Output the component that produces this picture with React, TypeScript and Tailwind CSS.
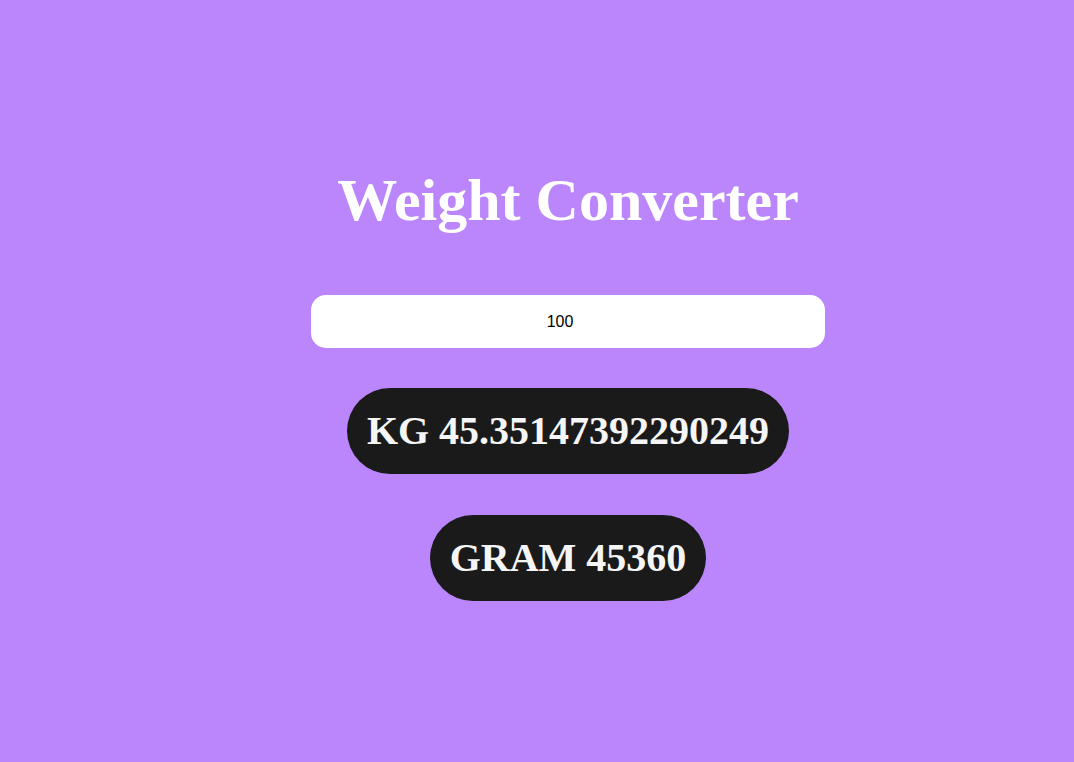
export default function App() {
  const pounds = 100;
  const kg = pounds / 2.205;
  const grams = pounds * 453.6;

  return (
    <div className="min-h-[762px] w-full bg-[#bb86fc] pl-[62px] font-['Liberation_Serif',serif]">
      <div className="flex flex-col items-center pt-[166px]">
        <h1 className="text-[60px] font-bold leading-[1.15] text-white">Weight Converter</h1>

        <input
          type="text"
          defaultValue={pounds}
          className="mt-[60px] h-[53px] w-[514px] rounded-[15px] bg-white pr-4 text-center font-['Liberation_Sans',sans-serif] text-[16px] text-black outline-none"
        />

        <div className="mt-[40px] rounded-full bg-[#1a1a1a] px-5 py-5 text-[40px] font-bold leading-[46px] text-[#f5f5f5]">
          KG {kg}
        </div>

        <div className="mt-[41px] rounded-full bg-[#1a1a1a] px-5 py-5 text-[40px] font-bold leading-[46px] text-[#f5f5f5]">
          GRAM {grams}
        </div>
      </div>
    </div>
  );
}
